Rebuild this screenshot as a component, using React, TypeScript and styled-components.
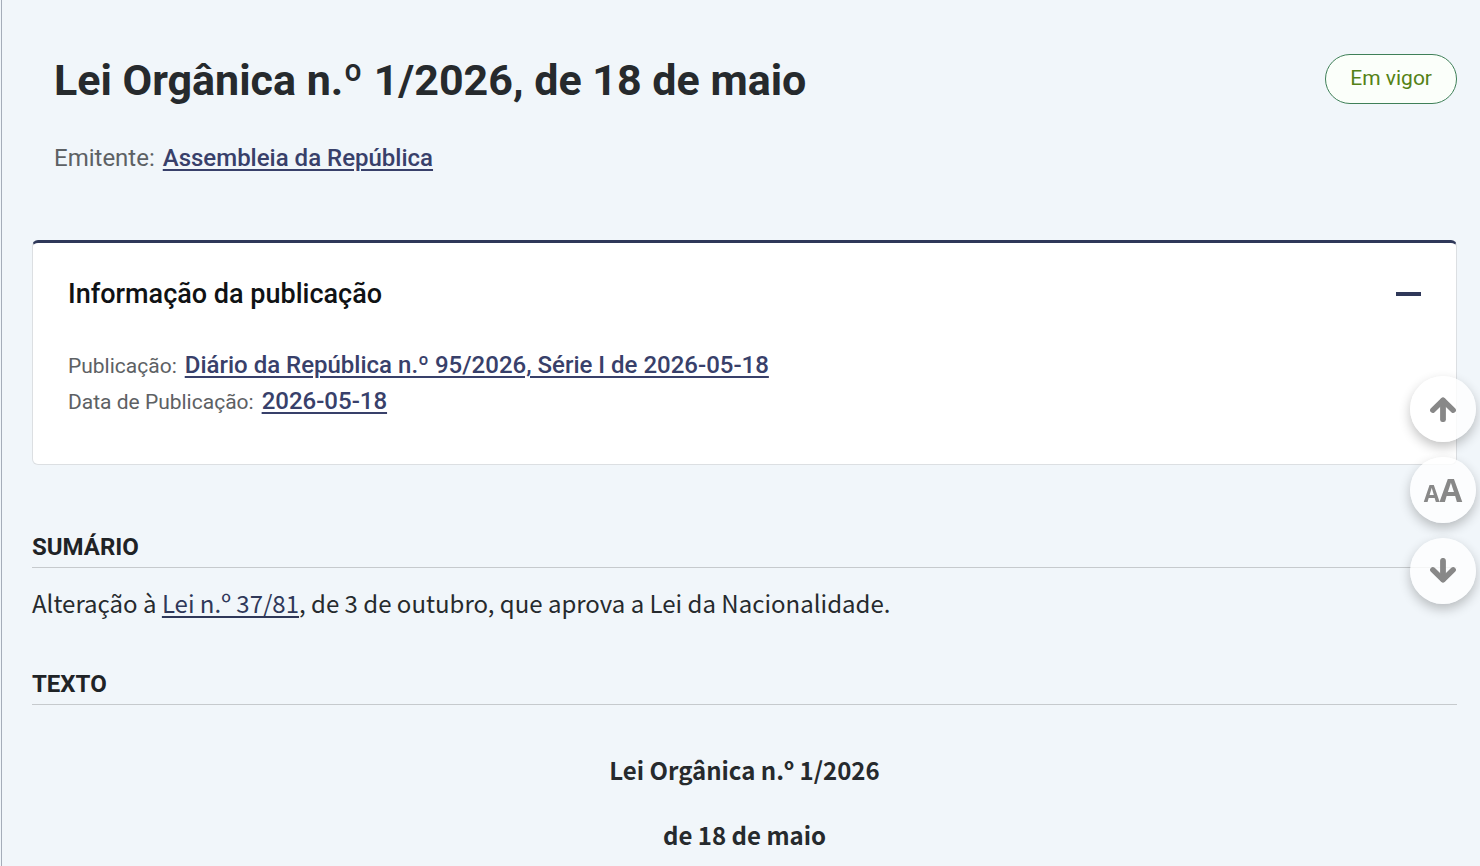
import React from "react";
import styled, { createGlobalStyle } from "styled-components";

const ui = `Roboto, "Liberation Sans", sans-serif`;
const reading = `"Noto Sans CJK SC", "Noto Sans", sans-serif`;
const navy = "#2f3859";

const GlobalStyle = createGlobalStyle`
  * { box-sizing: border-box; }
  body { margin: 0; background: #f1f6fa; color: #262a2d; font-family: ${ui}; }
  h1, h2, p, dl, dd { margin: 0; }
  button { font: inherit; cursor: pointer; }
`;

const Page = styled.main`
  min-height: 100vh;
  margin-left: 1px;
  padding: 48px 23px 0 30px;
  border-left: 1px solid #a5adb9;
  overflow: hidden;
`;

const Header = styled.header`
  padding-left: 22px;
`;

const TitleRow = styled.div`
  display: flex;
  align-items: flex-start;
  justify-content: space-between;
`;

const Title = styled.h1`
  font-size: 43px;
  line-height: 64px;
  font-weight: 700;
`;

const Status = styled.span`
  margin-top: 6px;
  padding: 0 24px 2px;
  border: 1px solid #3f8058;
  border-radius: 25px;
  background: #fbfffa;
  color: #548216;
  font-size: 21px;
  line-height: 46px;
`;

const Link = styled.a`
  color: ${navy};
  text-decoration: underline;
  text-decoration-thickness: 2px;
  text-underline-offset: 3px;
`;

const MetaLink = styled(Link)`
  margin-left: 8px;
  color: #38406a;
  font-size: 24px;
  font-weight: 500;
`;

const Issuer = styled.p`
  margin-top: 28px;
  color: #5d6164;
  font-size: 24px;
  line-height: 36px;
`;

const Card = styled.section`
  margin-top: 64px;
  padding: 31px 35px 45px;
  border: 1px solid #dcdfe2;
  border-top: 3px solid ${navy};
  border-radius: 6px;
  background: #fff;
`;

const CardToggle = styled.button`
  display: flex;
  align-items: center;
  justify-content: space-between;
  width: 100%;
  padding: 0;
  border: 0;
  background: none;
  color: #101214;
`;

const CardTitle = styled.span`
  font-size: 27px;
  line-height: 40px;
  font-weight: 500;
`;

const Minus = styled.span`
  width: 25px;
  height: 4px;
  background: ${navy};
`;

const Details = styled.dl`
  margin-top: 33px;
`;

const Detail = styled.div`
  display: flex;
  align-items: baseline;
  font-size: 24px;
  line-height: 36px;
`;

const Term = styled.dt`
  color: #5d6164;
  font-size: 21px;
  line-height: 24px;
`;

const Section = styled.section<{ $gap: number }>`
  margin-top: ${(p) => p.$gap}px;
`;

const SectionTitle = styled.h2`
  padding-bottom: 2px;
  border-bottom: 1px solid #c6cacd;
  color: #1f2326;
  font-size: 24px;
  line-height: 36px;
  font-weight: 700;
`;

const Summary = styled.p`
  margin-top: 17px;
  font-family: ${reading};
  font-size: 24px;
  line-height: 36px;
`;

const LawHeading = styled.p`
  margin-top: 29px;
  font-family: ${reading};
  font-size: 24px;
  line-height: 36px;
  font-weight: 600;
  text-align: center;

  &:first-of-type { margin-top: 47px; }
`;

const Tools = styled.nav`
  position: fixed;
  top: 376px;
  right: 4px;
  display: flex;
  flex-direction: column;
  gap: 15px;
`;

const Tool = styled.button`
  display: flex;
  align-items: center;
  justify-content: center;
  width: 66px;
  height: 66px;
  padding: 0;
  border: 0;
  border-radius: 50%;
  background: rgba(255, 255, 255, 0.8);
  box-shadow: 0 5px 12px rgba(0, 0, 0, 0.24);
  color: #888;
`;

const Letters = styled.span`
  display: flex;
  align-items: baseline;
  padding-top: 2px;
  font-family: "Open Sans", sans-serif;
  font-weight: 700;
  font-size: 33px;
  line-height: 40px;

  small { font-size: 23px; }
`;

const Arrow = ({ down }: { down?: boolean }) => (
  <svg width="26" height="26" viewBox="0 0 26 26" fill="none" stroke="currentColor" aria-hidden="true">
    <g transform={down ? "rotate(180 13 13)" : undefined}>
      <path d="M13 5V23.2" strokeWidth="5.8" strokeLinecap="round" />
      <path d="M2.8 14.2L13 4.2L23.2 14.2" strokeWidth="5.4" strokeLinecap="round" strokeLinejoin="round" />
    </g>
  </svg>
);

export default function App() {
  return (
    <>
      <GlobalStyle />
      <Page>
        <Header>
          <TitleRow>
            <Title>Lei Orgânica n.º 1/2026, de 18 de maio</Title>
            <Status>Em vigor</Status>
          </TitleRow>
          <Issuer>
            Emitente:
            <MetaLink href="#emitente">Assembleia da República</MetaLink>
          </Issuer>
        </Header>

        <Card>
          <CardToggle type="button" aria-expanded="true">
            <CardTitle>Informação da publicação</CardTitle>
            <Minus />
          </CardToggle>
          <Details>
            <Detail>
              <Term>Publicação:</Term>
              <dd>
                <MetaLink href="#diario">Diário da República n.º 95/2026, Série I de 2026-05-18</MetaLink>
              </dd>
            </Detail>
            <Detail>
              <Term>Data de Publicação:</Term>
              <dd>
                <MetaLink href="#data">2026-05-18</MetaLink>
              </dd>
            </Detail>
          </Details>
        </Card>

        <Section $gap={64}>
          <SectionTitle>SUMÁRIO</SectionTitle>
          <Summary>
            Alteração à <Link href="#lei-37-81">Lei n.º 37/81</Link>, de 3 de outubro, que aprova a Lei da Nacionalidade.
          </Summary>
        </Section>

        <Section $gap={45}>
          <SectionTitle>TEXTO</SectionTitle>
          <LawHeading>Lei Orgânica n.º 1/2026</LawHeading>
          <LawHeading>de 18 de maio</LawHeading>
        </Section>
      </Page>

      <Tools aria-label="Ferramentas de leitura">
        <Tool type="button" aria-label="Subir"><Arrow /></Tool>
        <Tool type="button" aria-label="Tamanho do texto">
          <Letters><small>A</small>A</Letters>
        </Tool>
        <Tool type="button" aria-label="Descer"><Arrow down /></Tool>
      </Tools>
    </>
  );
}
